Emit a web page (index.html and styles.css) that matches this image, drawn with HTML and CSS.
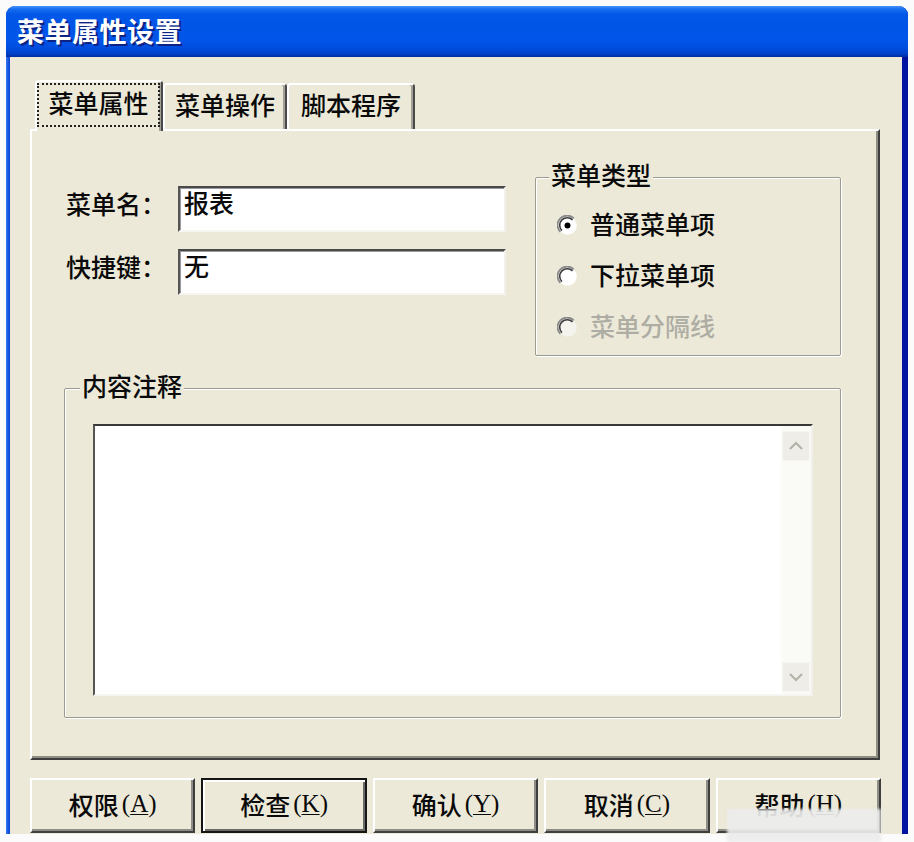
FILE: index.html
```html
<!DOCTYPE html>
<html lang="zh-CN">
<head>
<meta charset="utf-8">
<title>菜单属性设置</title>
<link rel="stylesheet" href="styles.css">
</head>
<body>
<div class="window">
  <div class="titlebar"><span class="title">菜单属性设置</span></div>
  <div class="client">
    <div class="tabs">
      <div class="tab active"><span class="focus">菜单属性</span></div>
      <div class="tab t2">菜单操作</div>
      <div class="tab t3">脚本程序</div>
    </div>
    <div class="panel">
      <div class="top">
        <div class="fields">
          <div class="row"><span class="label">菜单名：</span><div class="edit">报表</div></div>
          <div class="row row2"><span class="label">快捷键：</span><div class="edit">无</div></div>
        </div>
        <fieldset class="group type">
          <legend>菜单类型</legend>
          <div class="radio">
            <svg class="rb" viewBox="0 0 12 12" width="21" height="21"><circle cx="6" cy="6" r="5.3" fill="#fff"/><path d="M1.9 9.6 A5.4 5.4 0 0 1 9.6 1.9" fill="none" stroke="#8a8a8a" stroke-width="1"/><path d="M2.8 8.9 A4.3 4.3 0 0 1 8.9 2.8" fill="none" stroke="#3c3c3c" stroke-width="0.9"/><circle cx="6" cy="6" r="1.7" fill="#000"/></svg>
            <span>普通菜单项</span>
          </div>
          <div class="radio">
            <svg class="rb" viewBox="0 0 12 12" width="21" height="21"><circle cx="6" cy="6" r="5.3" fill="#fff"/><path d="M1.9 9.6 A5.4 5.4 0 0 1 9.6 1.9" fill="none" stroke="#8a8a8a" stroke-width="1"/><path d="M2.8 8.9 A4.3 4.3 0 0 1 8.9 2.8" fill="none" stroke="#3c3c3c" stroke-width="0.9"/></svg>
            <span>下拉菜单项</span>
          </div>
          <div class="radio disabled">
            <svg class="rb" viewBox="0 0 12 12" width="21" height="21"><circle cx="6" cy="6" r="5.3" fill="#f4f3ee"/><path d="M1.9 9.6 A5.4 5.4 0 0 1 9.6 1.9" fill="none" stroke="#8a8a8a" stroke-width="1"/><path d="M2.8 8.9 A4.3 4.3 0 0 1 8.9 2.8" fill="none" stroke="#3c3c3c" stroke-width="0.9"/></svg>
            <span>菜单分隔线</span>
          </div>
        </fieldset>
      </div>
      <fieldset class="group notes">
        <legend>内容注释</legend>
        <div class="memo">
          <div class="vscroll">
            <div class="arrow"><svg viewBox="0 0 16 10" width="16" height="10"><path d="M2 8 L8 2 L14 8" fill="none" stroke="#b3b2a8" stroke-width="2"/></svg></div>
            <div class="arrow"><svg viewBox="0 0 16 10" width="16" height="10"><path d="M2 2 L8 8 L14 2" fill="none" stroke="#b3b2a8" stroke-width="2"/></svg></div>
          </div>
        </div>
      </fieldset>
    </div>
    <div class="buttons">
      <div class="btn">权限<span class="acc">(<u>A</u>)</span></div>
      <div class="btn default">检查<span class="acc">(<u>K</u>)</span></div>
      <div class="btn">确认<span class="acc">(<u>Y</u>)</span></div>
      <div class="btn">取消<span class="acc">(<u>C</u>)</span></div>
      <div class="btn">帮助<span class="acc">(<u>H</u>)</span></div>
    </div>
  </div>
</div>
<div class="watermark"></div>
</body>
</html>
```
FILE: styles.css
```css
* { box-sizing: border-box; }
html, body { margin: 0; padding: 0; }
body {
  background: #fbfbfb;
  width: 914px;
  height: 842px;
  overflow: hidden;
  position: relative;
  font-family: "Noto Sans CJK SC", "Noto Sans", sans-serif;
  font-size: 25px;
  font-weight: 500;
  color: #0a0a0a;
}
.window {
  margin: 6px 0 0 6px;
  width: 902px;
  height: 828px;
  display: flex;
  flex-direction: column;
  background: linear-gradient(to right, #3a7cf0 0, #1656e0 2px, #0a46d8 4px, #0838c8 60%, #0018a4 99%, #0012a0 100%);
  border-radius: 9px 9px 0 0;
  overflow: hidden;
}
.titlebar {
  height: 51px;
  flex: none;
  padding: 0 0 2px 11px;
  display: flex;
  align-items: center;
  background: linear-gradient(to bottom, #4a94f8 0, #166ef0 3px, #0458e8 8px, #0054e6 20px, #0257ea 32px, #004ddf 42px, #003fc8 48px, #002c9c 51px);
}
.title {
  color: #fff;
  font-weight: 700;
  font-size: 27px;
  line-height: 1;
  letter-spacing: 0.5px;
  text-shadow: 2px 2px 0 #0c2383;
}
.client {
  flex: 1;
  margin: 0 6px 0 4px;
  background: #ece9d8;
  padding: 23px 0 0 20px;
  display: flex;
  flex-direction: column;
}
.tabs {
  display: flex;
  align-items: flex-end;
  margin-left: 5px;
  height: 49px;
  position: relative;
  z-index: 1;
}
.tab {
  height: 46px;
  border: 2px solid;
  border-bottom: 0;
  border-color: #fff #4a4a4a transparent #fff;
  border-radius: 4px 4px 0 0;
  box-shadow: inset -2px 0 0 #a3a196;
  background: #ece9d8;
  display: flex;
  align-items: center;
  justify-content: center;
  line-height: 30px;
  padding-bottom: 6px;
}
.tab.active {
  width: 128px;
  height: 51px;
  margin-bottom: -2px;
  padding: 1px 1px 2px 0;
  align-items: flex-start;
  justify-content: flex-start;
}
.tab.t2 { width: 124px; }
.tab.t3 { width: 128px; }
.focus {
  width: 123px;
  height: 44px;
  border: 2px dotted #222;
  display: flex;
  align-items: center;
  justify-content: center;
  padding-bottom: 7px;
}
.panel {
  width: 850px;
  height: 631px;
  border: 2px solid;
  border-color: #fff #3e3e3e #3e3e3e #fff;
  box-shadow: inset -2px -2px 0 #8e8d86;
  padding: 30px 37px 0 32px;
}
.top {
  display: flex;
  justify-content: space-between;
  align-items: flex-start;
}
.fields { margin-top: 25px; }
.row {
  display: flex;
  align-items: center;
  height: 46px;
}
.row2 { margin-top: 17px; }
.label { width: 114px; padding-left: 2px; padding-bottom: 12px; }
.edit {
  width: 328px;
  height: 46px;
  background: #fff;
  border: 2px solid;
  border-color: #4a4a4a #f1f0ea #f6f5f1 #555;
  box-shadow: inset 1px 1px 0 #9a9a9a;
  padding: 0 0 0 4px;
  line-height: 28px;
}
.group {
  margin: 0;
  border: 1px solid #9c9b91;
  border-radius: 2px;
  box-shadow: inset 1px 1px 0 #fff, 1px 1px 0 #fff;
  min-width: 0;
}
.group legend {
  padding: 0 2px 6px;
  line-height: 26px;
  background: #ece9d8;
}
.type {
  width: 306px;
  padding: 7px 0 2px 13px;
}
.radio {
  display: flex;
  align-items: center;
  height: 51px;
}
.radio span { padding-bottom: 6px; }
.rb { margin-left: 8px; margin-right: 12px; flex: none; }
.radio.disabled span { color: #aeada4; }
.notes {
  width: 777px;
  margin-top: 16px;
  padding: 20px 27px 21px 15px;
}
.memo {
  margin-left: 13px;
  width: 720px;
  height: 272px;
  background: #fff;
  border: 2px solid;
  border-color: #383838 #f0efe9 #f6f5f1 #555;
  display: flex;
  justify-content: flex-end;
}
.vscroll {
  width: 30px;
  background: #fafaf7;
  display: flex;
  flex-direction: column;
  justify-content: space-between;
  padding: 5px 0 2px;
}
.arrow {
  height: 30px;
  margin: 0 1px;
  background: #eeede7;
  border: 1px solid #f6f6f2;
  display: flex;
  align-items: center;
  justify-content: center;
}
.buttons {
  display: grid;
  grid-template-columns: repeat(5, 1fr);
  column-gap: 6px;
  width: 851px;
  height: 55px;
  margin-top: 18px;
}
.btn {
  border: 2px solid;
  border-color: #fff #3e3e3e #3e3e3e #fff;
  box-shadow: inset -2px -2px 0 #8e8d86;
  background: #ece9d8;
  display: flex;
  align-items: center;
  justify-content: center;
  line-height: 30px;
  padding-bottom: 4px;
}
.btn.default {
  border-color: #151515;
  box-shadow: inset 2px 2px 0 #fff, inset -2px -2px 0 #6a6a66;
}
.acc {
  font-family: "Liberation Serif", serif;
  font-weight: 400;
  margin-left: 3px;
}
.acc u { text-underline-offset: 2px; text-decoration-thickness: 1px; }
.watermark {
  position: absolute;
  left: 727px;
  top: 809px;
  width: 154px;
  height: 33px;
  background: rgba(236, 236, 236, 0.92);
  filter: blur(1.5px);
}
```
